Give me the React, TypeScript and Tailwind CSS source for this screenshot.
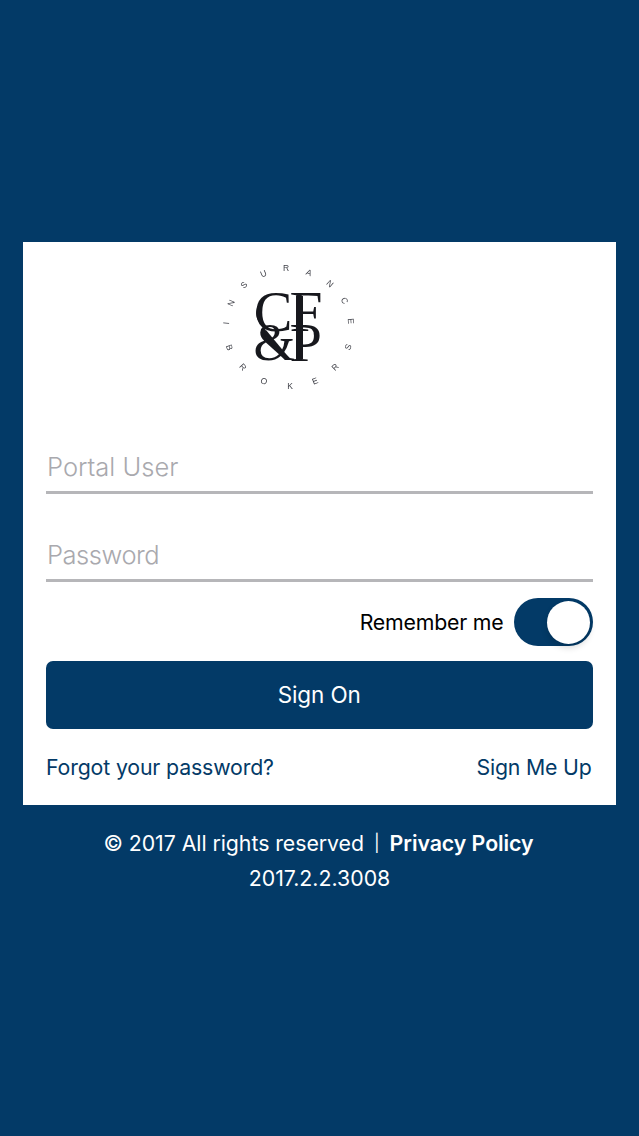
import { useState } from 'react';
import * as Switch from '@radix-ui/react-switch';

// Letters around the seal, the top arc reads clockwise and the bottom one counterclockwise
const ringLetters = [
  { char: 'I', x: 16, y: 73, angle: -86 },
  { char: 'N', x: 21, y: 53, angle: -66 },
  { char: 'S', x: 34, y: 35, angle: -45 },
  { char: 'U', x: 53.5, y: 23.5, angle: -23 },
  { char: 'R', x: 76, y: 18, angle: 0 },
  { char: 'A', x: 99, y: 22.5, angle: 22 },
  { char: 'N', x: 120, y: 33.5, angle: 42 },
  { char: 'C', x: 134.5, y: 50.5, angle: 62 },
  { char: 'E', x: 141, y: 71, angle: 86 },
  { char: 'B', x: 19.5, y: 97.5, angle: 70 },
  { char: 'R', x: 33, y: 117, angle: 48 },
  { char: 'O', x: 54, y: 131, angle: 23 },
  { char: 'K', x: 80, y: 136, angle: 0 },
  { char: 'E', x: 105, y: 131, angle: -22 },
  { char: 'R', x: 125, y: 117, angle: -45 },
  { char: 'S', x: 138, y: 97, angle: -68 },
];

const Logo = () => (
  <svg viewBox="0 0 160 150" className="h-[150px] w-[160px] blur-[0.4px]" role="img" aria-label="CF&P">
    <g fill="#3f4048" fontFamily="Liberation Sans, sans-serif" fontSize="8.5" textAnchor="middle">
      {ringLetters.map(({ char, x, y, angle }) => (
        <text key={`${x}-${y}`} transform={`translate(${x} ${y}) rotate(${angle})`} y="3">
          {char}
        </text>
      ))}
    </g>
    <g fill="#17181d" fontFamily="Liberation Serif, serif">
      <text transform="translate(44 80.5) scale(1.02 1)" fontSize="56.5">C</text>
      <text transform="translate(79.5 81) scale(1.06 1)" fontSize="56">F</text>
      <text transform="translate(43.5 110) scale(1.02 1)" fontSize="52.5">&amp;</text>
      <text transform="translate(79.5 110.5) scale(1.08 1)" fontSize="54">P</text>
      {/* heavy strokes of the monogram */}
      <path d="M55 48C43 56 43 71 56 78C50 70 50 56 55 48Z" />
      <path d="M51 81L56 80L81 110L75 110Z" />
      <rect x="86" y="46" width="7" height="63" />
    </g>
  </svg>
);

const fieldClass =
  'block w-full border-b-[3px] border-[#b6b6b9] bg-transparent pl-px text-[25.5px] leading-8 font-light text-black outline-none placeholder:text-[#a9a9ae]';

const App = () => {
  const [user, setUser] = useState('');
  const [password, setPassword] = useState('');
  const [remember, setRemember] = useState(true);

  return (
    <main className="flex min-h-screen flex-col bg-[#033a67] px-[23px] pt-[242px] font-['Inter',sans-serif] text-[21.3px]">
      <form
        className="flex h-[562.5px] w-[593px] flex-col bg-white pr-[23.5px] pl-[23px]"
        onSubmit={(e) => e.preventDefault()}
      >
        <div className="flex h-[200px] pt-2 pl-[164px]">
          <Logo />
        </div>
        <input
          type="text"
          aria-label="Portal User"
          placeholder="Portal User"
          value={user}
          onChange={(e) => setUser(e.target.value)}
          className={`${fieldClass} h-[52px]`}
        />
        <input
          type="password"
          aria-label="Password"
          placeholder="Password"
          value={password}
          onChange={(e) => setPassword(e.target.value)}
          className={`${fieldClass} mt-9 h-[52px] tracking-[-0.45px]`}
        />
        <div className="mt-4 flex h-12 items-center justify-end gap-2.5">
          <label htmlFor="remember" className="pt-px tracking-[-0.2px] text-black">Remember me</label>
          <Switch.Root
            id="remember"
            checked={remember}
            onCheckedChange={setRemember}
            className="flex h-12 w-[79px] items-center rounded-full bg-[#b6b6b9] p-[3px] data-[state=checked]:justify-end data-[state=checked]:bg-[#033a67]"
          >
            <Switch.Thumb className="block size-[43px] rounded-full bg-white shadow-[0_4px_6px_rgba(0,0,0,0.15)]" />
          </Switch.Root>
        </div>
        <button type="submit" className="mt-[15px] h-[68px] shrink-0 rounded-[7px] bg-[#033a67] text-[22.5px] tracking-[-0.1px] text-white">
          Sign On
        </button>
        <div className="mt-[22px] flex justify-between leading-8 text-[#033a67]">
          <a href="#" className="tracking-[-0.15px]">Forgot your password?</a>
          <a href="#" className="pr-px tracking-[-0.2px]">Sign Me Up</a>
        </div>
      </form>
      <footer className="mt-[21.5px] flex flex-col items-center leading-[35px] text-white">
        <p className="flex items-center pr-[2px] tracking-[-0.05px]">
          © 2017 All rights reserved
          <span className="mr-[10px] ml-[10px] text-[17px]">|</span>
          <a href="#" className="font-semibold">Privacy Policy</a>
        </p>
        <p>2017.2.2.3008</p>
      </footer>
    </main>
  );
};

export default App;
